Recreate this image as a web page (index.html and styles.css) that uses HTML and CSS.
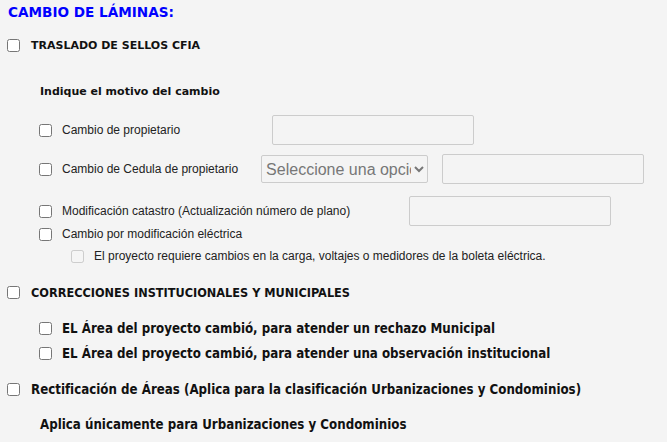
FILE: index.html
```html
<!DOCTYPE html>
<html lang="es">
<head>
    <meta charset="UTF-8">
    <meta name="viewport" content="width=device-width, initial-scale=1.0">
    <title>Cambio de láminas</title>
    <link rel="stylesheet" href="styles.css">
</head>
<body>
    <h2 class="title">CAMBIO DE LÁMINAS:</h2>

    <!-- Traslado de sellos -->
    <div class="row head traslado">
        <input type="checkbox" id="traslado">
        <label for="traslado">TRASLADO DE SELLOS CFIA</label>
    </div>

    <p class="row note indique">Indique el motivo del cambio</p>

    <div class="row sub propietario">
        <input type="checkbox" id="propietario">
        <label for="propietario">Cambio de propietario</label>
        <input type="text" class="field gap-prop">
    </div>

    <div class="row sub cedula">
        <input type="checkbox" id="cedula">
        <label for="cedula">Cambio de Cedula de propietario</label>
        <select class="picker">
            <option>Seleccione una opción</option>
        </select>
        <input type="text" class="field gap-ced">
    </div>

    <div class="row sub catastro">
        <input type="checkbox" id="catastro">
        <label for="catastro">Modificación catastro (Actualización número de plano)</label>
        <input type="text" class="field gap-cat">
    </div>

    <div class="row sub small electrica">
        <input type="checkbox" id="electrica">
        <label for="electrica">Cambio por modificación eléctrica</label>
    </div>

    <div class="row sub2 small boleta">
        <input type="checkbox" id="boleta" disabled>
        <label for="boleta">El proyecto requiere cambios en la carga, voltajes o medidores de la boleta eléctrica.</label>
    </div>

    <!-- Correcciones -->
    <div class="row head alt correcciones">
        <input type="checkbox" id="correcciones">
        <label for="correcciones">CORRECCIONES INSTITUCIONALES Y MUNICIPALES</label>
    </div>

    <div class="row sub alt big municipal">
        <input type="checkbox" id="municipal">
        <label for="municipal">EL Área del proyecto cambió, para atender un rechazo Municipal</label>
    </div>

    <div class="row sub alt big institucional">
        <input type="checkbox" id="institucional">
        <label for="institucional">EL Área del proyecto cambió, para atender una observación institucional</label>
    </div>

    <!-- Rectificacion -->
    <div class="row head alt big rectificacion">
        <input type="checkbox" id="rectificacion">
        <label for="rectificacion">Rectificación de Áreas (Aplica para la clasificación Urbanizaciones y Condominios)</label>
    </div>

    <p class="row note alt big aplica">Aplica únicamente para Urbanizaciones y Condominios</p>
</body>
</html>
```

FILE: styles.css
```css
body {
    margin: 0;
    padding: 0 8px;
    background-color: #f4f4f4;
    color: #222;
    font-family: "Liberation Sans", Arial, sans-serif;
    font-size: 12px;
}

.title {
    margin: 0;
    height: 24px;
    line-height: 24px;
    font-family: "DejaVu Sans", Verdana, sans-serif;
    font-size: 13.6px;
    font-weight: bold;
    color: #0000ff;
}

.row {
    display: flex;
    align-items: center;
    margin: 0;
}

.row input[type="checkbox"] {
    margin: 0 10px 0 0;
    width: 13px;
    height: 13px;
}

.head {
    height: 24px;
    margin-left: -1px;
    font-family: "DejaVu Sans", Verdana, sans-serif;
    font-size: 11px;
    font-weight: bold;
    color: #111;
}

.head input[type="checkbox"] {
    margin-right: 11px;
}

.note {
    height: 24px;
    padding-left: 32px;
    font-family: "DejaVu Sans", Verdana, sans-serif;
    font-size: 11px;
    font-weight: bold;
    color: #111;
}

.sub {
    height: 30px;
    padding-left: 31px;
}

.sub2 {
    padding-left: 63px;
}

.small {
    height: 16px;
}

/* lower block uses a narrower bold face */
.alt {
    font-family: "DejaVu Sans Condensed", Tahoma, sans-serif;
    font-weight: bold;
    color: #111;
}

.head.alt {
    font-size: 12.6px;
}

.sub.alt {
    height: 20px;
}

.alt.big {
    font-size: 13.2px;
}

.field {
    width: 202px;
    height: 30px;
    box-sizing: border-box;
    border: 1px solid #ccc;
    border-radius: 2px;
    background-color: #f4f4f4;
}

.picker {
    width: 167px;
    height: 28px;
    box-sizing: border-box;
    margin-left: 23px;
    border: 1px solid #ccc;
    border-radius: 2px;
    background-color: #f4f4f4;
    color: #777;
    font-family: "Liberation Sans", Arial, sans-serif;
    font-size: 16px;
}

.gap-prop { margin-left: 92px; }
.gap-ced { margin-left: 14px; }
.gap-cat { margin-left: 59px; }

/* vertical rhythm */
.traslado { margin-top: 9px; }
.indique { margin-top: 22px; }
.propietario { margin-top: 12px; }
.cedula { margin-top: 9px; }
.catastro { margin-top: 12px; }
.boleta { margin-top: 6px; }
.correcciones { margin-top: 16px; }
.municipal { margin-top: 14px; }
.institucional { margin-top: 5px; }
.rectificacion { margin-top: 14px; }
.aplica { margin-top: 11px; }
```
